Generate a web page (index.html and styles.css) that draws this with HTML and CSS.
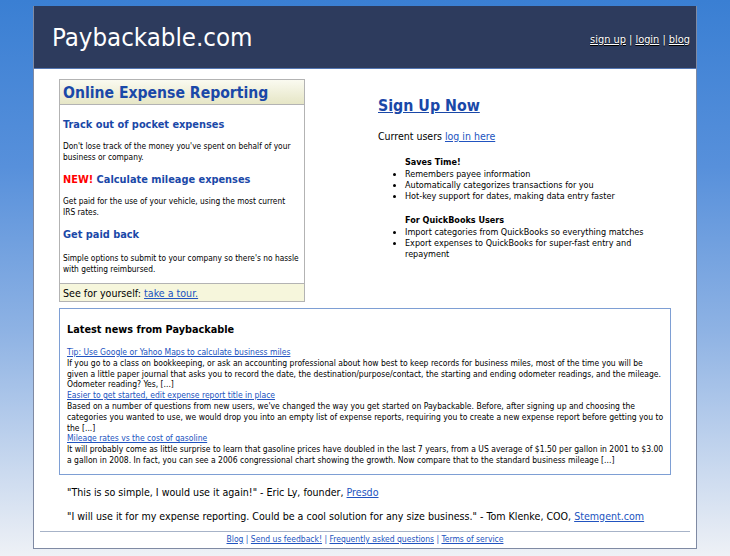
FILE: index.html
```html
<!DOCTYPE html>
<html>
<head>
<meta charset="utf-8">
<link rel="stylesheet" href="styles.css">
</head>
<body>
<div class="page">
  <header class="top">
    <div class="logo">Paybackable.com</div>
    <nav class="toplinks"><a href="#">sign up</a> | <a href="#">login</a> | <a href="#">blog</a></nav>
  </header>
  <main class="content">
    <div class="row">
      <section class="features">
        <h1 class="features-title">Online Expense Reporting</h1>
        <div class="features-body">
          <h2 class="feat-head">Track out of pocket expenses</h2>
          <p class="feat-text">Don't lose track of the money you've spent on behalf of your business or company.</p>
          <h2 class="feat-head"><span class="new">NEW!</span> Calculate mileage expenses</h2>
          <p class="feat-text">Get paid for the use of your vehicle, using the most current<br>IRS rates.</p>
          <h2 class="feat-head">Get paid back</h2>
          <p class="feat-text last">Simple options to submit to your company so there's no hassle with getting reimbursed.</p>
        </div>
        <div class="features-foot">See for yourself: <a href="#">take a tour.</a></div>
      </section>
      <section class="signup">
        <a class="signup-link" href="#">Sign Up Now</a>
        <p class="current">Current users <a href="#">log in here</a></p>
        <div class="benefit">
          <div class="benefit-head">Saves Time!</div>
          <ul class="benefit-list">
            <li>Remembers payee information</li>
            <li>Automatically categorizes transactions for you</li>
            <li>Hot-key support for dates, making data entry faster</li>
          </ul>
        </div>
        <div class="benefit">
          <div class="benefit-head">For QuickBooks Users</div>
          <ul class="benefit-list">
            <li>Import categories from QuickBooks so everything matches</li>
            <li>Export expenses to QuickBooks for super-fast entry and repayment</li>
          </ul>
        </div>
      </section>
    </div>
    <section class="news">
      <h3 class="news-title">Latest news from Paybackable</h3>
      <div class="news-item">
        <a href="#">Tip: Use Google or Yahoo Maps to calculate business miles</a>
        <p>If you go to a class on bookkeeping, or ask an accounting professional about how best to keep records for business miles, most of the time you will be given a little paper journal that asks you to record the date, the destination/purpose/contact, the starting and ending odometer readings, and the mileage. Odometer reading? Yes, [...]</p>
      </div>
      <div class="news-item">
        <a href="#">Easier to get started, edit expense report title in place</a>
        <p>Based on a number of questions from new users, we've changed the way you get started on Paybackable. Before, after signing up and choosing the categories you wanted to use, we would drop you into an empty list of expense reports, requiring you to create a new expense report before getting you to the [...]</p>
      </div>
      <div class="news-item">
        <a href="#">Mileage rates vs the cost of gasoline</a>
        <p>It will probably come as little surprise to learn that gasoline prices have doubled in the last 7 years, from a US average of $1.50 per gallon in 2001 to $3.00 a gallon in 2008. In fact, you can see a 2006 congressional chart showing the growth. Now compare that to the standard business mileage [...]</p>
      </div>
    </section>
    <div class="quotes">
      <p class="quote">"This is so simple, I would use it again!" - Eric Ly, founder, <a href="#">Presdo</a></p>
      <p class="quote">"I will use it for my expense reporting. Could be a cool solution for any size business." - Tom Klenke, COO, <a href="#">Stemgent.com</a></p>
    </div>
  </main>
  <footer class="foot">
    <a href="#">Blog</a> | <a href="#">Send us feedback!</a> | <a href="#">Frequently asked questions</a> | <a href="#">Terms of service</a>
  </footer>
</div>
</body>
</html>
```

FILE: styles.css
```css
html, body {
  margin: 0;
  padding: 0;
}
body {
  height: 556px;
  overflow: hidden;
  background: linear-gradient(to bottom, #3a7fd3 0%, #5790db 30%, #8fb3e4 60%, #cbdaef 85%, #eef1f6 100%);
  font-family: "DejaVu Sans Condensed", "DejaVu Sans", sans-serif;
  color: #000;
}
a {
  color: #2153c0;
}
.page {
  width: 664px;
  margin: 6px auto 0;
  background: #fff;
  border: 1px solid #7f8aa3;
  border-top: 0;
  box-sizing: border-box;
}
.top {
  height: 63px;
  box-sizing: border-box;
  background: #2d3b5d;
  border-bottom: 1px solid #5376b2;
  display: flex;
  justify-content: space-between;
  align-items: flex-start;
  padding: 0 6px 0 18px;
}
.logo {
  color: #fff;
  font-size: 25.6px;
  line-height: 30px;
  margin-top: 16px;
}
.toplinks {
  color: #fff;
  font-size: 10.9px;
  line-height: 13px;
  margin-top: 27px;
  text-shadow: 0 1px 1px #000;
}
.toplinks a {
  color: #fff;
}
.content {
  padding: 10px 0 0 25px;
}
.row {
  display: flex;
  align-items: flex-start;
}
.features {
  width: 246px;
  box-sizing: border-box;
  border: 1px solid #b3b3b3;
}
.features-title {
  margin: 0;
  height: 25px;
  box-sizing: border-box;
  background: linear-gradient(to bottom, #fafaf0, #e6e6c6);
  border-bottom: 1px solid #b3b3b3;
  color: #1a48a8;
  font-size: 15.6px;
  font-weight: bold;
  padding: 3px 0 0 3px;
  line-height: 20px;
}
.features-body {
  padding: 13px 3px 8px 3px;
}
.feat-head {
  margin: 0;
  color: #1a48a8;
  font-size: 10.9px;
  font-weight: bold;
  line-height: 14px;
}
.new {
  color: #f00;
}
.feat-text {
  margin: 9px 0 10px;
  font-size: 8.3px;
  line-height: 11px;
}
.feat-text.last {
  margin: 11px 0 0;
}
.features-foot {
  background: #f6f6dc;
  border-top: 1px solid #b3b3b3;
  font-size: 10.6px;
  padding: 2px 3px 1px;
  line-height: 14px;
}
.signup {
  margin-left: 73px;
  padding-top: 17px;
}
.signup-link {
  display: inline-block;
  font-size: 15.8px;
  line-height: 19px;
  font-weight: bold;
  color: #1a48a8;
}
.current {
  font-size: 10.5px;
  line-height: 13px;
  margin: 15px 0 14px;
}
.benefit {
  margin-left: 18px;
  margin-bottom: 13px;
  font-size: 9px;
  line-height: 11px;
}
.benefit-head {
  font-weight: bold;
  margin-left: 9px;
}
.benefit-list {
  margin: 1px 0 0;
  padding: 0 0 0 9px;
  width: 245px;
}
.news {
  width: 612px;
  box-sizing: border-box;
  border: 1px solid #7e9fd4;
  margin-top: 6px;
  padding: 14px 4px 8px 7px;
}
.news-title {
  margin: 0 0 11px;
  font-size: 10.8px;
  line-height: 13px;
  font-weight: bold;
}
.news-item {
  font-size: 8.5px;
  line-height: 10.8px;
}
.news-item p {
  margin: 0;
}
.quotes {
  padding: 11px 0 0 8px;
}
.quote {
  font-size: 10.6px;
  margin: 0 0 11px;
  line-height: 13px;
}
.quote:last-child {
  margin-bottom: 8px;
}
.foot {
  margin: 0 6px;
  border-top: 1px solid #a7b3c8;
  text-align: center;
  font-size: 8.5px;
  line-height: 10px;
  padding: 2px 0 4px;
  color: #2153c0;
}
```
